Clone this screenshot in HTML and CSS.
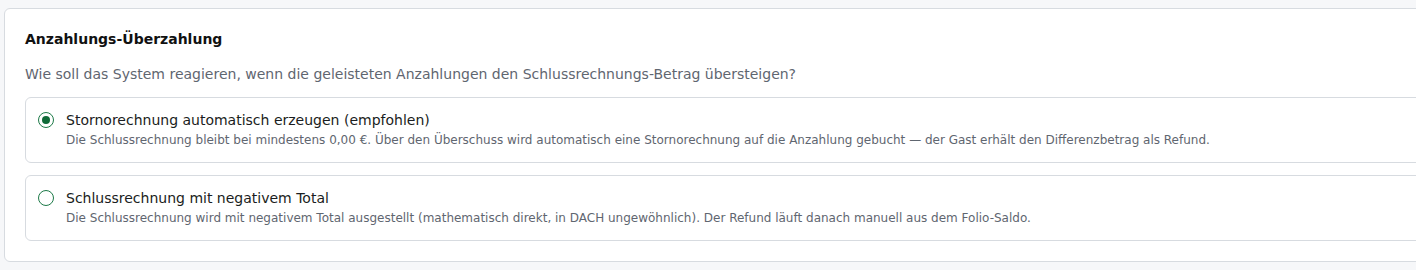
FILE: index.html
```html
<!DOCTYPE html>
<html lang="de">
<head>
<meta charset="utf-8">
<title>Anzahlungs-Überzahlung</title>
<link rel="stylesheet" href="styles.css">
</head>
<body>
<section class="card">
  <h3 class="card-title">Anzahlungs-Überzahlung</h3>
  <p class="card-lead">Wie soll das System reagieren, wenn die geleisteten Anzahlungen den Schlussrechnungs-Betrag übersteigen?</p>
  <div class="options">
    <label class="option">
      <span class="radio checked"></span>
      <span class="option-text">
        <span class="option-title">Stornorechnung automatisch erzeugen (empfohlen)</span>
        <span class="option-desc">Die Schlussrechnung bleibt bei mindestens 0,00 €. Über den Überschuss wird automatisch eine Stornorechnung auf die Anzahlung gebucht — der Gast erhält den Differenzbetrag als Refund.</span>
      </span>
    </label>
    <label class="option">
      <span class="radio"></span>
      <span class="option-text">
        <span class="option-title">Schlussrechnung mit negativem Total</span>
        <span class="option-desc">Die Schlussrechnung wird mit negativem Total ausgestellt (mathematisch direkt, in DACH ungewöhnlich). Der Refund läuft danach manuell aus dem Folio-Saldo.</span>
      </span>
    </label>
  </div>
</section>
</body>
</html>
```

FILE: styles.css
```css
html, body {
  margin: 0;
  padding: 0;
}
body {
  background: #f6f7f9;
  font-family: "DejaVu Sans", sans-serif;
  color: #1f2328;
  overflow: hidden;
  padding: 8px 0 0 4px;
}
.card {
  width: 1440px;
  box-sizing: border-box;
  background: #fff;
  border: 1px solid #d7dbe0;
  border-radius: 6px;
  padding: 20px 20px 20px 20px;
}
.card-title {
  margin: 0;
  font-size: 14px;
  line-height: 20px;
  font-weight: bold;
  color: #111;
}
.card-lead {
  margin: 15px 0 12px;
  font-size: 14px;
  line-height: 21px;
  color: #5f6670;
}
.options {
  display: flex;
  flex-direction: column;
  gap: 12px;
}
.option {
  display: flex;
  align-items: flex-start;
  gap: 12px;
  border: 1px solid #d7dbe0;
  border-radius: 6px;
  padding: 12px 12px 12px 12px;
}
.radio {
  flex: none;
  width: 16px;
  height: 16px;
  box-sizing: border-box;
  border: 1.5px solid #1d7a48;
  border-radius: 50%;
  margin-top: 2px;
  position: relative;
}
.radio.checked::after {
  content: "";
  position: absolute;
  left: 2.5px;
  top: 2.5px;
  width: 8px;
  height: 8px;
  border-radius: 50%;
  background: #0f6a38;
}
.option-text {
  display: flex;
  flex-direction: column;
}
.option-title {
  font-size: 14px;
  line-height: 21px;
  color: #1a1d21;
}
.option-desc {
  font-size: 12px;
  line-height: 19px;
  color: #5f6670;
}
```
